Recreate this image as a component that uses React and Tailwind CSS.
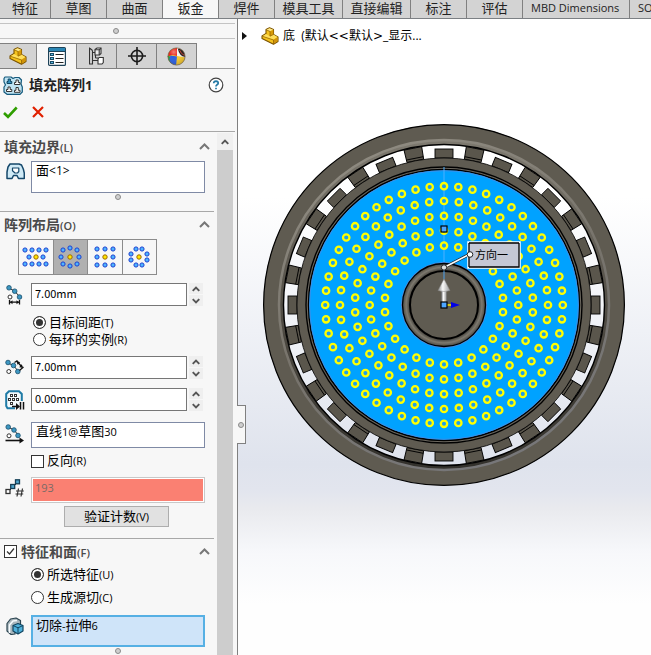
import React from 'react';

const TABS = [
  { label: '特征', width: 'w-[51px]' },
  { label: '草图', width: 'w-14' },
  { label: '曲面', width: 'w-14' },
  { label: '钣金', width: 'w-14', active: true },
  { label: '焊件', width: 'w-14' },
  { label: '模具工具', width: 'w-[68px]' },
  { label: '直接编辑', width: 'w-[68px]' },
  { label: '标注', width: 'w-14' },
  { label: '评估', width: 'w-14' },
  { label: 'MBD Dimensions', width: 'w-[107px]', latin: true },
  { label: 'SOLIDWORKS 插件', width: 'w-[120px]', latin: true },
];

function Ribbon() {
  return (
    <nav className="flex h-[19px] shrink-0 overflow-x-clip border-b border-[#7c8084] bg-[#d3d3d3]">
      {TABS.map((t) => (
        <button
          key={t.label}
          type="button"
          className={`h-[18px] shrink-0 whitespace-nowrap border-r border-[#808080] pb-[2px] leading-4 text-[#222] ${t.width} ${
            t.active ? 'bg-[#f7f7f7]' : ''
          } ${t.latin ? 'pl-2 text-left text-[11px]' : 'text-center text-[13px]'}`}
        >
          {t.label}
        </button>
      ))}
    </nav>
  );
}

function Dot() {
  return <span className="block size-[6px] rounded-full border border-[#8a8a8a] bg-[#cfcfcf]" />;
}

/* ---------- icons ---------- */

function PartIcon() {
  return (
    <svg width="18" height="18" viewBox="0 0 18 18" strokeLinejoin="round">
      <path d="M1 9 L5 6.5 V2.5 L8.5 0.8 L12.5 2.5 V7.5 L17 10 V14.5 L12.5 17.3 L1 11.5 Z" fill="#f4c21d" stroke="#7a5200" strokeWidth="1.1" />
      <path d="M5.3 2.7 L8.5 1.2 L12.2 2.7 L9 4.3 Z" fill="#ffe98a" />
      <path d="M9 4.3 V9 L12.4 7.6 V3 Z" fill="#d79a08" />
      <path d="M1.4 9.2 L5 7 L9 9.2 L12.4 7.6 L16.6 10 L12.5 12.6 Z" fill="#ffdf5c" />
      <path d="M12.5 12.8 V17 L16.6 14.3 V10.3 Z" fill="#d0930a" />
      <path d="M5 2.7 L9 4.5 V9.2 M1.2 9.2 L12.5 13 V17 M9 9.2 L12.5 7.5" fill="none" stroke="#8a5c00" strokeWidth="0.7" />
    </svg>
  );
}

function PropertyIcon() {
  return (
    <svg width="18" height="19" viewBox="0 0 18 19">
      <rect x="0.6" y="0.6" width="16.8" height="17.8" rx="1" fill="#fff" stroke="#1d4258" strokeWidth="1.2" />
      <rect x="1" y="1" width="16" height="3" fill="#2b86b4" />
      <path d="M1 4.5H17" stroke="#1d4258" />
      <g fill="#5db7dd" stroke="#174a66">
        <rect x="2.5" y="6.5" width="3" height="2" />
        <rect x="2.5" y="10.5" width="3" height="2" />
        <rect x="2.5" y="14.5" width="3" height="2" />
      </g>
      <path d="M7.5 7.5H15.5M7.5 11.5H15.5M7.5 15.5H15.5" stroke="#222" />
    </svg>
  );
}

function ConfigIcon() {
  return (
    <svg width="15" height="18" viewBox="0 0 15 18" fill="none" stroke="#333" strokeWidth="1.1">
      <path d="M0.5 0.5V17.5M0.5 1L3.5 3.5M0.5 17H3.5M3.5 3.5V17.5" />
      <path d="M3.5 5.5H6M3.5 13.5H9" />
      <path d="M6 2.5L8 1H12V6.5L10.5 8H6Z" fill="#eee" />
      <path d="M6 2.8H10.2V8M10.2 3L12 1.2" />
      <path d="M9 12L10 10.5H14.3V15.5L13 17H9Z" fill="#fff" />
      <path d="M6.5 8V11M6.5 11H9" />
    </svg>
  );
}

function TargetIcon() {
  return (
    <svg width="18" height="18" viewBox="0 0 18 18" fill="none" stroke="#1c1c1c" strokeWidth="1.6">
      <circle cx="9" cy="9" r="5.6" />
      <path d="M9 0V18M0 9H18" />
    </svg>
  );
}

function AppearanceIcon() {
  return (
    <svg width="19" height="19" viewBox="0 0 19 19">
      <defs>
        <clipPath id="ball"><circle cx="9.5" cy="9.5" r="8.6" /></clipPath>
        <radialGradient id="ballShine" cx="0.35" cy="0.25" r="0.8">
          <stop offset="0" stopColor="#fff" stopOpacity="0.4" />
          <stop offset="0.3" stopColor="#fff" stopOpacity="0" />
          <stop offset="1" stopColor="#000" stopOpacity="0.2" />
        </radialGradient>
      </defs>
      <g clipPath="url(#ball)">
        <rect width="19" height="19" fill="#f7c92e" />
        <path d="M0 10L5 8L11 9L12 0H0Z" fill="#ea2a1e" />
        <path d="M0 8.5L5 10V19H0Z" fill="#1f9e3c" />
        <path d="M3.5 8.5L10 9.5L9 19H4Q1.5 13 3.5 8.5" fill="#2b5fe0" />
        <path d="M10 0L10 9L19 10.500V0Z" fill="#f4f4f4" />
        <path d="M11 2Q14 0 18.500 5V10Q12 9 11 2" fill="#231a18" />
        <path d="M12.500 3Q14 7 17.500 8.500" fill="none" stroke="#c8402f" />
        <circle cx="9.5" cy="9.5" r="9" fill="url(#ballShine)" />
      </g>
      <circle cx="9.5" cy="9.5" r="8.6" fill="none" stroke="#6b5b4a" strokeWidth="0.7" />
    </svg>
  );
}

function FillPatternIcon() {
  return (
    <svg width="20" height="19" viewBox="0 0 20 19" strokeLinejoin="round">
      <path d="M2 1 H8 L10 2.5 L12 1.5 H16 L18.5 4 L18 8 L19.3 11 V16 L17 18.3 H4 L1 16 V11 L2.5 9 L1 6 V2.5 Z" fill="#bfe3f2" stroke="#155a7d" strokeWidth="1.2" />
      <path d="M4 7.5V5.5H5.2V3H7.4V5.5H8.8V7.5Z" fill="#3593c0" stroke="#0f4460" />
      <path d="M11.5 8.5V6.5H13V4H15.3V6.5H17V8.5Z M3.5 15.5V13.5H5V11H7.2V13.5H8.8V15.5Z M11.5 16.3V14.3H13V11.5H15.3V14.3H17V16.3Z" fill="#fff" stroke="#333" />
    </svg>
  );
}

function FaceIcon() {
  return (
    <svg width="19" height="17" viewBox="0 0 19 17" strokeLinejoin="round">
      <path d="M4 1 H13 L15.5 2 L17.3 6 L18.3 10 V15.5 H12.5 L11 12.5 H7.5 L6 15.5 H1 V9 L2 4 Z" fill="#cfeaf6" stroke="#14476a" strokeWidth="1.5" />
      <path d="M6.5 5 H12.8 V8.5 L11.5 10 H9 L6.5 7.8 Z" fill="#fff" stroke="#14476a" strokeWidth="1.2" />
    </svg>
  );
}

const NODE = { fill: '#3d97c2', stroke: '#164d6b', strokeWidth: 0.8 };

function SpacingIcon() {
  return (
    <svg width="18" height="20" viewBox="0 0 18 20">
      <path d="M3 3 L8.5 6 L14 12" fill="none" stroke="#222" />
      <circle cx="3" cy="2.8" r="2.3" {...NODE} />
      <circle cx="8.7" cy="6.2" r="2.3" {...NODE} />
      <circle cx="13.5" cy="12" r="2.3" {...NODE} />
      <circle cx="4" cy="12" r="2" fill="#fff" stroke="#333" />
      <path d="M3.5 15V19.5M13.5 15V19.5M4 17.2H13" stroke="#111" strokeWidth="1.3" />
      <path d="M4 17.2L6.5 15.2V19.2ZM13 17.2L10.5 15.2V19.2Z" fill="#111" />
    </svg>
  );
}

function RingSpacingIcon() {
  return (
    <svg width="20" height="17" viewBox="0 0 20 17">
      <path d="M3 4 L8.5 6.5 L13 12" fill="none" stroke="#222" />
      <circle cx="3" cy="3.5" r="2.3" {...NODE} />
      <circle cx="8.5" cy="6.5" r="2.3" {...NODE} />
      <circle cx="12.8" cy="12.5" r="2.3" {...NODE} />
      <circle cx="3.8" cy="12.5" r="2" fill="#fff" stroke="#333" />
      <path d="M9.5 3.5L12.5 1.5M14.5 11.5L18.5 8M12 2.5L17 8" fill="none" stroke="#111" strokeWidth="1.3" />
      <path d="M11.5 1.8L15.2 3.2L12.5 5.8ZM18 8.8L14.2 8.2L16.8 5.2Z" fill="#111" />
    </svg>
  );
}

function MarginIcon() {
  return (
    <svg width="20" height="20" viewBox="0 0 20 20">
      <path d="M10 18.3H2.5L1.2 16V4L4 1.2H14L16.8 4V11" fill="#f4fafc" stroke="#1f7ba6" strokeWidth="2" />
      <g fill="#fff" stroke="#333">
        <rect x="5.5" y="4.5" width="2" height="2" /><rect x="9.5" y="4.5" width="2" height="2" />
        <rect x="3.5" y="8.5" width="2" height="2" /><rect x="7.5" y="8.5" width="2" height="2" /><rect x="11.5" y="8.5" width="2" height="2" />
        <rect x="5.5" y="12.5" width="2" height="2" />
      </g>
      <path d="M7 16.5H13M15.5 12V19.5M18.5 12V19.5" stroke="#111" strokeWidth="1.5" />
      <path d="M15 16.5L11 13V20Z" fill="#111" />
    </svg>
  );
}

function DirectionIcon() {
  return (
    <svg width="20" height="20" viewBox="0 0 20 20">
      <path d="M3 3 L9 6 L14 12" fill="none" stroke="#222" />
      <circle cx="3.2" cy="3" r="2.3" {...NODE} />
      <circle cx="9" cy="6" r="2.3" {...NODE} />
      <circle cx="13" cy="11.5" r="2.3" {...NODE} />
      <circle cx="4" cy="11.8" r="2" fill="#fff" stroke="#333" />
      <path d="M0.5 16.5H15" stroke="#111" strokeWidth="1.6" />
      <path d="M19 16.5L14.5 13.5V19.5Z" fill="#111" />
    </svg>
  );
}

function CountIcon() {
  return (
    <svg width="20" height="20" viewBox="0 0 20 20">
      <path d="M3 15L12.5 5.5" stroke="#222" />
      <rect x="1" y="12.5" width="4" height="4" fill="#fff" stroke="#333" strokeWidth="1.3" />
      <rect x="5.7" y="7.5" width="4" height="4" fill="#4ea4cb" stroke="#163f56" strokeWidth="1.3" />
      <rect x="10.5" y="2.8" width="4" height="4" fill="#4ea4cb" stroke="#163f56" strokeWidth="1.3" />
      <path d="M13.5 11.5L12 19.5M17.5 11.5L16 19.5M11 14H18.8M10.5 17H18.2" stroke="#333" strokeWidth="1.2" />
    </svg>
  );
}

function FeatureIcon() {
  return (
    <svg width="18" height="18" viewBox="0 0 18 18" strokeLinejoin="round">
      <path d="M1 14V6.5L4.5 2L10 1L14.5 3.5V7L9 12V17L5 17.5Z" fill="#a9b6bc" stroke="#2b4450" strokeWidth="1.2" />
      <path d="M3.5 16V8L7 4L11 3.5" fill="none" stroke="#f6fbfd" strokeWidth="1.6" />
      <path d="M7 8.5L12 6.5L17 8.5V14L12 17L7 14Z" fill="#4fb0da" stroke="#114560" strokeWidth="1.2" />
      <path d="M7 8.5L12 10.8L17 8.5M12 10.8V17" fill="none" stroke="#114560" />
    </svg>
  );
}

function Chevron({ up = true, small = false }) {
  return (
    <svg width={small ? 8 : 11} height={small ? 6 : 7} viewBox="0 0 11 7" fill="none" stroke={small ? '#555' : '#777'} strokeWidth={small ? 2.6 : 2}>
      <path d={up ? 'M1 6L5.5 1.5L10 6' : 'M1 1L5.5 5.5L10 1'} />
    </svg>
  );
}

/* ---------- property panel ---------- */

function GroupHeader({ title, hot, checkable }) {
  return (
    <header className="flex h-[27px] items-center pr-1 pb-[2px] pl-1 text-[14px] font-bold text-[#4a4a4a]">
      {checkable ? (
        <label className="flex items-center gap-1">
          <Tick defaultChecked />
          <span>
            {title}
            <span className="text-[11px] font-semibold">({hot})</span>
          </span>
        </label>
      ) : (
        <h2>
          {title}
          <span className="text-[11px] font-semibold">({hot})</span>
        </h2>
      )}
      <button type="button" aria-label={title} className="ml-auto flex">
        <Chevron />
      </button>
    </header>
  );
}

function Tick({ defaultChecked }) {
  return (
    <span className="relative flex size-[13px]">
      <input
        type="checkbox"
        defaultChecked={defaultChecked}
        className="peer size-[13px] appearance-none border border-[#333] bg-white"
      />
      <svg className="pointer-events-none absolute inset-0 hidden peer-checked:block" width="13" height="13" viewBox="0 0 13 13" fill="none" stroke="#333" strokeWidth="1.2">
        <path d="M3 6.5L5.5 9L10 3.5" />
      </svg>
    </span>
  );
}

function Radio({ name, label, hot, defaultChecked }) {
  return (
    <label className="flex h-[17px] items-center gap-[3px] text-[13px] text-black">
      <input
        type="radio"
        name={name}
        defaultChecked={defaultChecked}
        className="size-[13px] appearance-none rounded-full border border-[#333] bg-white checked:bg-[#333] checked:shadow-[inset_0_0_0_2px_white]"
      />
      <span>
        {label}
        <span className="text-[11px]">({hot})</span>
      </span>
    </label>
  );
}

function IconSlot({ children }) {
  return <span className="flex w-[31px] shrink-0 justify-center pr-px">{children}</span>;
}

function Spinner({ icon, label, value }) {
  return (
    <div className="flex h-[23px] items-center pr-[11px]">
      <IconSlot>{icon}</IconSlot>
      <input
        aria-label={label}
        defaultValue={value}
        className="h-[23px] min-w-0 flex-1 border border-[#767676] bg-white px-[3px] pb-1 font-['Noto_Sans_CJK_SC',sans-serif] text-[11px] text-black"
      />
      <span className="ml-[2px] flex w-[14px] flex-col gap-px">
        <button type="button" aria-label={`${label} +`} className="flex h-[11px] items-center justify-center bg-[#efefef]">
          <Chevron small />
        </button>
        <button type="button" aria-label={`${label} -`} className="flex h-[11px] items-center justify-center bg-[#efefef]">
          <Chevron small up={false} />
        </button>
      </span>
    </div>
  );
}

function Selection({ icon, label, className, children }) {
  return (
    <div className="flex items-start pr-[9px]">
      <div className="pt-[2px]">
        <IconSlot>{icon}</IconSlot>
      </div>
      <ul role="listbox" aria-label={label} className={`min-w-0 flex-1 text-[13px] leading-4 text-black ${className}`}>
        <li role="option" aria-selected="true">
          {children}
        </li>
      </ul>
    </div>
  );
}

function Latin({ children }) {
  return <span className="text-[11px]">{children}</span>;
}

const BLUE = { fill: '#4cb4ff', stroke: '#1c3fd0' };

function LayoutGlyph({ points }) {
  return (
    <svg width="32" height="32" viewBox="-16 -16 32 32">
      {points.map(([x, y]) => (
        <circle key={`${x},${y}`} cx={x} cy={y} r="2.1" {...BLUE} />
      ))}
      <circle r="2.2" fill="#ffe600" stroke="#a06a00" />
    </svg>
  );
}

const LAYOUTS = [
  {
    name: '穿孔',
    points: [[-11, -7], [-4, -7], [3, -7], [10, -7], [-7, 0], [7, 0], [-11, 7], [-4, 7], [3, 7], [10, 7]],
  },
  {
    name: '圆周',
    selected: true,
    points: [[0, -9], [7, -7], [9, 0], [7, 7], [0, 9], [-7, 7], [-9, 0], [-7, -7]],
  },
  {
    name: '方形',
    points: [[-8, -8], [0, -8], [8, -8], [-8, 0], [8, 0], [-8, 8], [0, 8], [8, 8]],
  },
  {
    name: '多边形',
    points: [[-3, -8], [3, -8], [8, -3], [8, 3], [3, 8], [-3, 8], [-8, 3], [-8, -3]],
  },
];

function PropertyPanel() {
  return (
    <aside className="relative flex w-[238px] shrink-0 flex-col border-r border-[#808080] bg-[#f7f7f7]">
      <div className="mt-1 mr-[2px] flex h-4 items-center justify-center border-y border-[#c4c4c4] pr-1">
        <Dot />
      </div>
      <div className="mt-1 mr-[2px] flex h-[26px] shrink-0 border-b border-[#a0a0a0]">
        {[
          ['特征树', <PartIcon />, 'w-[37px]'],
          ['属性', <PropertyIcon />, 'w-10'],
          ['配置', <ConfigIcon />, 'w-10'],
          ['尺寸', <TargetIcon />, 'w-10'],
          ['外观', <AppearanceIcon />, 'w-10'],
        ].map(([name, icon, width], i) => (
          <button
            key={name}
            type="button"
            aria-label={name}
            className={`flex h-[26px] items-center justify-center border-t border-r border-[#808080] ${width} ${
              i === 1 ? 'bg-[#f7f7f7]' : 'border-b bg-[#d3d3d3]'
            }`}
          >
            {icon}
          </button>
        ))}
      </div>
      <div className="flex h-8 shrink-0 items-center pr-[13px] pl-[3px]">
        <FillPatternIcon />
        <h1 className="ml-[6px] text-[14px] font-bold text-[#222]">
          填充阵列<span className="text-[13px]">1</span>
        </h1>
        <button type="button" aria-label="帮助" className="ml-auto">
          <svg width="16" height="16" viewBox="0 0 16 16" fill="none">
            <circle cx="8" cy="8" r="6.8" fill="#fff" stroke="#444" strokeWidth="1.2" />
            <path d="M5.7 6.3Q5.8 4.2 8 4.2Q10.3 4.3 10.2 6.2Q10.1 7.3 8.8 8Q8 8.5 8 9.5M8 10.8V12.3" stroke="#2279a5" strokeWidth="1.7" />
          </svg>
        </button>
      </div>
      <div className="mr-[2px] flex h-[31px] shrink-0 items-center gap-[14px] border-b border-[#a8a8a8] pb-2 pl-[3px]">
        <button type="button" aria-label="确定">
          <svg width="15" height="13" viewBox="0 0 15 13" fill="none" stroke="#2f9e00" strokeWidth="2.6">
            <path d="M1 7L5 10.8L13.7 1.5" />
          </svg>
        </button>
        <button type="button" aria-label="取消">
          <svg width="12" height="12" viewBox="0 0 12 12" fill="none" stroke="#e02000" strokeWidth="2.2">
            <path d="M1 1L11 11M11 1L1 11" />
          </svg>
        </button>
      </div>

      <div className="flex min-h-0 flex-1 pr-1">
        <div className="flex min-w-0 flex-1 flex-col overflow-hidden pr-[3px]">
          <section className="border-b border-[#a8a8a8] pt-[2px]">
            <GroupHeader title="填充边界" hot="L" />
            <Selection icon={<FaceIcon />} label="填充边界" className="h-8 border border-[#7f8aa5] bg-white px-1">
              面<span className="text-[12px]">&lt;1&gt;</span>
            </Selection>
            <div className="flex h-[18px] justify-center pt-px pl-[22px]">
              <Dot />
            </div>
          </section>

          <section className="border-b border-[#a8a8a8] pb-[11px]">
            <GroupHeader title="阵列布局" hot="O" />
            <div className="ml-[18px] flex h-9 w-[139px] border border-[#8c8c8c]">
              {LAYOUTS.map((l, i) => (
                <button
                  key={l.name}
                  type="button"
                  aria-label={l.name}
                  className={`flex flex-1 items-center justify-center overflow-hidden ${i > 0 ? 'border-l border-[#8c8c8c]' : ''} ${
                    l.selected ? 'bg-[#b0b0b0]' : ''
                  }`}
                >
                  <LayoutGlyph points={l.points} />
                </button>
              ))}
            </div>
            <div className="mt-2">
              <Spinner icon={<SpacingIcon />} label="环间距" value="7.00mm" />
            </div>
            <div className="mt-2 pl-[33px]">
              <Radio name="spacing" label="目标间距" hot="T" defaultChecked />
              <Radio name="spacing" label="每环的实例" hot="R" />
            </div>
            <div className="mt-2">
              <Spinner icon={<RingSpacingIcon />} label="实例间距" value="7.00mm" />
            </div>
            <div className="mt-[9px]">
              <Spinner icon={<MarginIcon />} label="边距" value="0.00mm" />
            </div>
            <div className="mt-[11px]">
              <Selection icon={<DirectionIcon />} label="阵列方向" className="h-[26px] border border-[#7f8aa5] bg-white px-1">
                直线<Latin>1@</Latin>草图<Latin>30</Latin>
              </Selection>
            </div>
            <label className="mt-1 flex h-[18px] items-center gap-[3px] pl-[31px] text-[13px] text-black">
              <Tick />
              <span>
                反向<Latin>(R)</Latin>
              </span>
            </label>
            <div className="mt-[7px] flex items-start pr-[9px]">
              <IconSlot><CountIcon /></IconSlot>
              <input
                aria-label="实例数"
                readOnly
                value="193"
                className="h-[26px] min-w-0 flex-1 border border-[#c8c8c8] bg-[#fa8072] px-[3px] pb-[6px] text-[11px] text-[#7a6a66] shadow-[inset_0_0_0_1px_white]"
              />
            </div>
            <button type="button" className="mt-[3px] ml-16 block h-[21px] w-[105px] border border-[#adadad] bg-[#e1e1e1] text-[13px] leading-[18px] text-black">
              验证计数<Latin>(V)</Latin>
            </button>
          </section>

          <section>
            <GroupHeader title="特征和面" hot="F" checkable />
            <div className="flex flex-col gap-[6px] pl-[31px]">
              <Radio name="features" label="所选特征" hot="U" defaultChecked />
              <Radio name="features" label="生成源切" hot="C" />
            </div>
            <div className="mt-[9px]">
              <Selection icon={<FeatureIcon />} label="所选特征" className="h-8 border-2 border-[#56b0e4] bg-[#cfe4f9] px-[3px]">
                切除<Latin>-</Latin>拉伸<Latin>6</Latin>
              </Selection>
            </div>
            <div className="flex justify-center pt-px pl-[22px]">
              <Dot />
            </div>
          </section>
        </div>
        <div className="mt-px w-4 shrink-0 bg-[#cdcdcd]">
          <button type="button" aria-label="向上滚动" className="flex h-[17px] w-4 items-center justify-center bg-[#f0f0f0]">
            <Chevron small />
          </button>
        </div>
      </div>

      <button
        type="button"
        aria-label="折叠面板"
        className="absolute top-[386px] left-full flex h-[39px] w-[9px] items-center justify-center border-y border-r border-[#808080] bg-[#f7f7f7]"
      >
        <Dot />
      </button>
    </aside>
  );
}

/* ---------- model view ---------- */

const HOLE_RINGS = [
  { r: 59.4, n: 26 },
  { r: 74.3, n: 32 },
  { r: 89.1, n: 38 },
  { r: 104, n: 44 },
  { r: 118.8, n: 52 },
];

const HOLES = HOLE_RINGS.flatMap(({ r, n }) =>
  Array.from({ length: n }, (_, i) => {
    const a = (i / n) * Math.PI * 2;
    return [r * Math.sin(a), -r * Math.cos(a)];
  }),
);

const STEPS = Array.from({ length: 16 }, (_, i) => i * 22.5);

function Model() {
  return (
    <svg width="364" height="364" viewBox="-181 -182 364 364" className="shrink-0">
      <defs>
        <linearGradient id="rim" x1="0.3" y1="0" x2="0.7" y2="1">
          <stop offset="0" stopColor="#8f8b81" />
          <stop offset="0.5" stopColor="#77736b" />
          <stop offset="1" stopColor="#77777a" />
        </linearGradient>
        <linearGradient id="rimInner" x1="0" y1="0" x2="0" y2="1">
          <stop offset="0" stopColor="#7d796f" />
          <stop offset="0.5" stopColor="#524e46" />
          <stop offset="1" stopColor="#33312c" />
        </linearGradient>
        <radialGradient id="boss" gradientUnits="userSpaceOnUse" cx="0" cy="0" r="42">
          <stop offset="0.82" stopColor="#45423b" />
          <stop offset="0.9" stopColor="#7d796f" />
          <stop offset="1" stopColor="#45423b" />
        </radialGradient>
        <linearGradient id="arrow" x1="0" y1="0" x2="1" y2="0">
          <stop offset="0" stopColor="#8a8a8a" />
          <stop offset="0.4" stopColor="#fafafa" />
          <stop offset="1" stopColor="#9a9a9a" />
        </linearGradient>
      </defs>

      {/* outer rim */}
      <g fill="none">
        <circle r="170.5" stroke="#5f5b51" strokeWidth="20" />
        <circle r="162.5" stroke="url(#rimInner)" strokeWidth="4" />
        <circle r="165" stroke="url(#rim)" strokeWidth="2.5" />
        <circle r="180.4" stroke="#000" strokeWidth="1.2" />
        <circle r="160.5" stroke="#000" strokeWidth="1.4" />
      </g>

      {/* teeth between the rim and the inner band */}
      {STEPS.map((a) => (
        <g key={a} stroke="#000" strokeWidth="0.9" fill="#5a564c">
          <rect x="-9" y="-156" width="18" height="9" transform={`rotate(${a})`} />
          <g transform={`rotate(${a + 11.25})`}>
            <path d="M-8.5 -147L-9 -159.7H9L8.5 -147Z" />
            <path d="M-8.5 -149.5H8.5" />
          </g>
        </g>
      ))}

      {/* inner band and perforated face */}
      <circle r="142.5" fill="none" stroke="#5f5b51" strokeWidth="9" />
      <circle r="147" fill="none" stroke="#000" strokeWidth="0.8" />
      <circle r="138" fill="#6c685f" stroke="#000" strokeWidth="1.4" />
      <circle r="135.5" fill="#00a2ff" stroke="#000" strokeWidth="1.4" />
      <circle r="134.3" fill="none" stroke="#3d8ee8" />
      <path d="M0 -138V-38" stroke="#4fb0ff" />
      <g fill="#1f9fe8" stroke="#ffff00" strokeWidth="2.3">
        {HOLES.map(([x, y]) => (
          <circle key={`${x.toFixed(2)},${y.toFixed(2)}`} cx={x} cy={y} r="3.2" />
        ))}
      </g>

      {/* central boss */}
      <circle r="42.5" fill="none" stroke="#5a86d8" />
      <circle r="41.5" fill="url(#boss)" stroke="#000" strokeWidth="1.3" />
      <circle r="34" fill="#5f5b51" stroke="#000" strokeWidth="2" />
      <path d="M0 -36V-26" stroke="#4aa0ee" />

      {/* triad and handles */}
      <rect x="-2.5" y="-15" width="5" height="15" fill="url(#arrow)" stroke="#777" strokeWidth="0.5" />
      <path d="M0 -26L6 -14.5Q0 -12.5 -6 -14.5Z" fill="url(#arrow)" stroke="#888" strokeWidth="0.5" />
      <path d="M3 0H8" stroke="#ffee00" strokeWidth="1.5" />
      <path d="M7 -3L16 0L7 3Z" fill="#0000e6" />
      <rect x="-3" y="-3" width="6" height="6" fill="#4da6ff" stroke="#000" strokeWidth="1.2" />
      <rect x="-3" y="-79" width="6" height="6" fill="#4da6ff" stroke="#000" strokeWidth="1.2" />

      {/* direction callout */}
      <path d="M0 -37.5L25 -50.5" stroke="#222" strokeWidth="3" />
      <path d="M0 -37.5L25 -50.5" stroke="#fff" strokeWidth="1.5" />
      <rect x="24" y="-63" width="52" height="26" fill="#c4c7d4" stroke="#fff" strokeWidth="1.5" />
      <path d="M25 -38H75V-62M25 -62H75M25 -62V-38" fill="none" stroke="#000" strokeWidth="1.3" />
      <circle cx="0" cy="-37.5" r="2.7" fill="#ddd" stroke="#222" />
      <circle cx="26" cy="-50.5" r="2.8" fill="#fff" stroke="#222" />
      <text x="31" y="-46" fontSize="11" fill="#000">方向一</text>
    </svg>
  );
}

function Bracket({ children }) {
  return <span className="font-['DejaVu_Sans',sans-serif]">{children}</span>;
}

function Viewport() {
  return (
    <main className="flex min-w-0 flex-1 flex-col bg-[linear-gradient(180deg,#fff_0%,#fff_28%,#dfe3ed_70%,#e2e5ee_74%,#e9eaee_77%,#f7f8fb_84%,#fefefe_92%)]">
      <div className="flex h-[34px] shrink-0 items-center pl-1 text-[12px] text-black">
        <button type="button" aria-label="展开" className="flex">
          <svg width="5" height="8" viewBox="0 0 5 8">
            <path d="M0 0L5 4L0 8Z" fill="#111" />
          </svg>
        </button>
        <span className="ml-[14px] flex">
          <PartIcon />
        </span>
        <span className="ml-1 whitespace-pre">
          底  (默认<Bracket>&lt;&lt;</Bracket>默认<Bracket>&gt;</Bracket>_显示...
        </span>
      </div>
      <div className="mt-[70px] flex justify-center overflow-hidden">
        <Model />
      </div>
    </main>
  );
}

export default function App() {
  return (
    <div className="flex h-screen flex-col overflow-hidden bg-white font-['Open_Sans','Noto_Sans_CJK_SC',sans-serif]">
      <Ribbon />
      <div className="flex min-h-0 flex-1">
        <PropertyPanel />
        <Viewport />
      </div>
    </div>
  );
}
